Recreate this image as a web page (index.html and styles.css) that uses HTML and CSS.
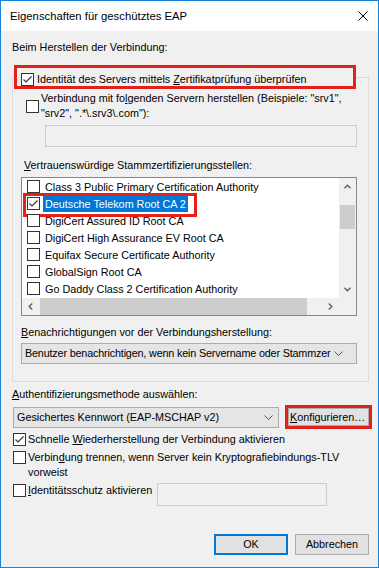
FILE: index.html
```html
<!DOCTYPE html>
<html lang="de">
<head>
	<meta charset="UTF-8">
	<title>Eigenschaften für geschütztes EAP</title>
	<link rel="stylesheet" href="styles.css">
</head>
<body>
	<div class="window">
		<div class="titlebar">
			<span class="title">Eigenschaften für geschütztes EAP</span>
			<svg class="close" width="10" height="10" viewBox="0 0 10 10"><path d="M0.5 0.5L9.5 9.5M9.5 0.5L0.5 9.5" stroke="#000" stroke-width="1" fill="none"/></svg>
		</div>
		<div class="content">
			<div class="label">Beim Herstellen der Verbindung:</div>

			<fieldset class="group">
				<legend class="redbox legend">
					<div class="chk">
						<span class="cb"><svg width="11" height="11" viewBox="0 0 11 11"><path d="M1.5 5.5L4 8L9.5 2.5" stroke="#333" stroke-width="1.1" fill="none"/></svg></span>
						<span class="gap3">Identität des Servers mittels <u>Z</u>ertifikatprüfung überprüfen</span>
					</div>
				</legend>

				<div class="chk srvrow">
					<span class="cb"></span>
					<span>Verbindung mit fo<u>l</u>genden Servern herstellen (Beispiele: "srv1",<br>"srv2", ".*\.srv3\.com"):</span>
				</div>
				<div class="textbox srvbox"></div>

				<div class="label trust"><u>V</u>ertrauenswürdige Stammzertifizierungsstellen:</div>
				<div class="list">
					<ul class="items">
						<li><span class="cb"></span><span class="name">Class 3 Public Primary Certification Authority</span></li>
						<li class="sel"><span class="cb"><svg width="11" height="11" viewBox="0 0 11 11"><path d="M1.5 5.5L4 8L9.5 2.5" stroke="#333" stroke-width="1.1" fill="none"/></svg></span><span class="name">Deutsche Telekom Root CA 2</span><span class="mark"></span></li>
						<li><span class="cb"></span><span class="name">DigiCert Assured ID Root CA</span></li>
						<li><span class="cb"></span><span class="name">DigiCert High Assurance EV Root CA</span></li>
						<li><span class="cb"></span><span class="name">Equifax Secure Certificate Authority</span></li>
						<li><span class="cb"></span><span class="name">GlobalSign Root CA</span></li>
						<li><span class="cb"></span><span class="name">Go Daddy Class 2 Certification Authority</span></li>
					</ul>
					<div class="vscroll">
						<div class="sbtn"><svg width="7" height="5" viewBox="0 0 7 5"><path d="M0.5 4.2L3.5 1.2L6.5 4.2" stroke="#606060" stroke-width="1.4" fill="none"/></svg></div>
						<div class="vtrack"><div class="vthumb"></div></div>
						<div class="sbtn"><svg width="7" height="5" viewBox="0 0 7 5"><path d="M0.5 0.8L3.5 3.8L6.5 0.8" stroke="#606060" stroke-width="1.4" fill="none"/></svg></div>
					</div>
					<div class="hscroll">
						<div class="sbtn"><svg width="5" height="7" viewBox="0 0 5 7"><path d="M4.2 0.5L1.2 3.5L4.2 6.5" stroke="#606060" stroke-width="1.4" fill="none"/></svg></div>
						<div class="hthumb"></div>
						<div class="htrack"></div>
						<div class="sbtn"><svg width="5" height="7" viewBox="0 0 5 7"><path d="M0.8 0.5L3.8 3.5L0.8 6.5" stroke="#606060" stroke-width="1.4" fill="none"/></svg></div>
						<div class="corner"></div>
					</div>
				</div>

				<div class="label notify"><u>B</u>enachrichtigungen vor der Verbindungsherstellung:</div>
				<div class="combo notifycombo">
					<span class="combotext tight">Benutzer benachrichtigen, wenn kein Servername oder Stammzer</span>
					<svg class="arrow" width="9" height="5" viewBox="0 0 9 5"><path d="M0.5 0.5L4.5 4.5L8.5 0.5" stroke="#555" stroke-width="1" fill="none"/></svg>
				</div>
			</fieldset>

			<div class="label auth"><u>A</u>uthentifizierungsmethode auswählen:</div>
			<div class="authrow">
				<div class="combo authcombo">
					<span class="combotext">Gesichertes Kennwort (EAP-MSCHAP v2)</span>
					<svg class="arrow" width="9" height="5" viewBox="0 0 9 5"><path d="M0.5 0.5L4.5 4.5L8.5 0.5" stroke="#555" stroke-width="1" fill="none"/></svg>
				</div>
				<div class="redbox cfgbox">
					<div class="btn cfg"><u>K</u>onfigurieren…</div>
				</div>
			</div>

			<div class="chk row">
				<span class="cb"><svg width="11" height="11" viewBox="0 0 11 11"><path d="M1.5 5.5L4 8L9.5 2.5" stroke="#333" stroke-width="1.1" fill="none"/></svg></span>
				<span>Schnelle <u>W</u>iederherstellung der Verbindung aktivieren</span>
			</div>
			<div class="chk row top">
				<span class="cb"></span>
				<span>Verbin<u>d</u>ung trennen, wenn Server kein Kryptografiebindungs-TLV<br>vorweist</span>
			</div>
			<div class="chk row top">
				<span class="cb"></span>
				<span class="idlabel"><u>I</u>dentitätsschutz aktivieren</span>
				<div class="textbox idbox"></div>
			</div>

			<div class="btnrow">
				<div class="btn default">OK</div>
				<div class="btn">Abbrechen</div>
			</div>
		</div>
	</div>
</body>
</html>
```

FILE: styles.css
```css
*{margin:0;padding:0;box-sizing:border-box;list-style:none;}
body{font-family:"Liberation Sans",Arial,sans-serif;font-size:10.8px;line-height:15px;color:#000;background:#f0f0f0;}
u{text-decoration:underline;text-underline-offset:1px;}

.window{width:379px;height:568px;border:1px solid #1883d7;background:#f0f0f0;overflow:hidden;}
.titlebar{height:30px;background:#fff;display:flex;align-items:center;justify-content:space-between;padding:0 10px 0 9px;}
.title{font-size:11.3px;}
.content{padding:9px 0 0 11px;}

/* checkboxes */
.chk{display:flex;align-items:center;gap:2px;white-space:nowrap;}
.cb{width:13px;height:13px;border:1px solid #333;background:#fff;flex:none;display:block;}
.cb svg{display:block;}
.gap3{margin-left:1px;}

/* group box with checkbox caption */
.group{width:357px;margin-top:10px;border:1px solid #dcdcdc;padding:0 0 17px 0;}
.redbox{border:3px solid #e3211b;}
.legend{margin-left:1px;width:342px;height:24px;padding:4px 0 0 4px;}
.legend .chk{height:14px;}

.srvrow{margin:2px 0 0 13px;}
.textbox{border:1px solid #cccccc;background:#f0f0f0;}
.srvbox{margin:4px 0 0 32px;width:312px;height:22px;}

.trust{margin:11px 0 0 11px;}

/* certificate list */
.list{margin:4px 0 0 8px;width:336px;height:139px;border:1px solid #828790;background:#fff;display:grid;grid-template-columns:317px 17px;grid-template-rows:120px 17px;}
.items{overflow:hidden;}
.items li{height:17px;display:flex;align-items:center;padding-left:5px;white-space:nowrap;position:relative;}
.items .name{margin-left:3px;padding:0 2px;line-height:16px;}
.items .sel .name{background:#0078d7;color:#fff;}
.mark{position:absolute;left:1px;top:-2px;width:174px;height:24px;border:3px solid #e3211b;}

.vscroll{background:#f0f0f0;display:flex;flex-direction:column;}
.sbtn{width:17px;height:17px;display:flex;align-items:center;justify-content:center;flex:none;}
.vtrack{flex:1;}
.vthumb{margin:10px 1px 0 1px;height:24px;background:#cdcdcd;}
.hscroll{grid-column:1 / 3;background:#f0f0f0;display:flex;}
.hthumb{margin:0 0 0 1px;width:267px;background:#cdcdcd;}
.htrack{flex:1;}
.corner{width:17px;flex:none;}

.notify{margin:9px 0 0 8px;}
.combo{height:21px;border:1px solid #acacac;background:#e5e5e5;display:flex;align-items:center;padding-left:3px;}
.combotext{flex:1;overflow:hidden;white-space:nowrap;}
.tight{letter-spacing:-0.17px;}
.notifycombo{margin:3px 0 0 8px;width:336px;}
.notifycombo .arrow{margin:0 13px 0 1px;}

.auth{margin-top:5px;}
.authrow{display:flex;align-items:center;gap:6px;margin-top:3px;}
.authcombo{margin-left:1px;width:266px;}
.authcombo .arrow{margin-right:5px;}
.cfgbox{width:87px;height:24px;}
.btn{height:21px;border:1px solid #adadad;background:#e1e1e1;display:flex;align-items:center;justify-content:center;}
.cfg{height:18px;justify-content:flex-start;padding-left:1px;}

.row{margin:3px 0 0 1px;}
.row.top{align-items:flex-start;}
.row.top .cb{margin-top:1px;}
.idlabel{width:127px;}
.idbox{width:170px;height:23px;}

.btnrow{display:flex;justify-content:flex-end;gap:7px;margin-top:28px;padding-right:9px;}
.btnrow .btn{width:74px;}
.btnrow .default{border:2px solid #0078d7;}
```
